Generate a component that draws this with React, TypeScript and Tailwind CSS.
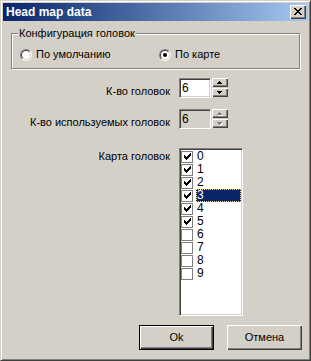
import React from "react";

const raised =
  "shadow-[inset_1px_1px_0_#ffffff,inset_-1px_-1px_0_#404040,inset_-2px_-2px_0_#808080]";
const sunken =
  "border border-t-[#808080] border-l-[#808080] border-r-white border-b-white shadow-[inset_1px_1px_0_#404040,inset_-1px_-1px_0_#d4d0c8]";

function CloseGlyph() {
  // classic 8x7 pixel X
  return (
    <svg width="8" height="7" viewBox="0 0 8 7" shapeRendering="crispEdges">
      <path
        fill="#000"
        d="M0 0h2v1h-2z M6 0h2v1h-2z M1 1h2v1h-2z M5 1h2v1h-2z M2 2h4v1h-4z M3 3h2v1h-2z M2 4h4v1h-4z M1 5h2v1h-2z M5 5h2v1h-2z M0 6h2v1h-2z M6 6h2v1h-2z"
      />
    </svg>
  );
}

function Arrow({ down, disabled }: { down?: boolean; disabled?: boolean }) {
  const d = down ? "M0 0h5v1h-1v1h-1v1h-1v-1h-1v-1h-1z" : "M2 0h1v1h1v1h1v1h-5v-1h1v-1h1z";
  return (
    <svg width="6" height="4" viewBox="0 0 6 4" shapeRendering="crispEdges">
      {disabled && <path d={d} fill="#ffffff" transform="translate(1 1)" />}
      <path d={d} fill={disabled ? "#808080" : "#000000"} />
    </svg>
  );
}

function Check() {
  return (
    <svg width="7" height="7" viewBox="0 0 7 7" shapeRendering="crispEdges">
      <path
        fill="#000"
        d="M6 0h1v1h-1z M5 1h2v1h-2z M0 2h1v1h-1z M4 2h3v1h-3z M0 3h2v1h-2z M3 3h3v1h-3z M0 4h5v1h-5z M1 5h3v1h-3z M2 6h1v1h-1z"
      />
    </svg>
  );
}

function Radio({ checked, label, className }: { checked?: boolean; label: string; className?: string }) {
  return (
    <div className={`flex items-center ${className ?? ""}`}>
      <span className="w-[12px] h-[12px] rounded-full border border-t-[#808080] border-l-[#808080] border-r-white border-b-white flex items-center justify-center">
        <span className="w-[10px] h-[10px] rounded-full bg-white border border-t-[#404040] border-l-[#404040] border-r-[#d4d0c8] border-b-[#d4d0c8] flex items-center justify-center">
          {checked && <span className="w-[4px] h-[4px] rounded-full bg-black" />}
        </span>
      </span>
      <span className="ml-[4px]">{label}</span>
    </div>
  );
}

function Spin({ label, value, disabled, className }: { label: string; value: string; disabled?: boolean; className?: string }) {
  return (
    <div className={`flex items-start ${className ?? ""}`}>
      <div className="w-[167px] text-right mt-[7px]">{label}</div>
      <div className={`ml-[9px] w-[32px] h-[20px] ${sunken} ${disabled ? "bg-[#d4d0c8]" : "bg-white"} pl-[2px] pt-[2px] leading-[14px] text-[12px]`}>
        {value}
      </div>
      <div className="ml-[1px] flex flex-col gap-[1px]">
        <div className={`w-[16px] h-[9px] bg-[#d4d0c8] ${raised} flex items-center justify-center`}>
          <Arrow disabled={disabled} />
        </div>
        <div className={`w-[16px] h-[9px] bg-[#d4d0c8] ${raised} flex items-center justify-center`}>
          <Arrow down disabled={disabled} />
        </div>
      </div>
    </div>
  );
}

const heads = [0, 1, 2, 3, 4, 5, 6, 7, 8, 9];
const checkedHeads = 6;
const selectedHead = 3;

export default function App() {
  return (
    <div className="w-[311px] h-[361px] bg-[#d4d0c8] border border-t-[#d4d0c8] border-l-[#d4d0c8] border-r-[#404040] border-b-[#404040] shadow-[inset_1px_1px_0_#ffffff,inset_-1px_-1px_0_#808080] p-[2px] font-['Liberation_Sans',sans-serif] text-[11px] leading-[13px] text-black flex flex-col">
      {/* Title bar */}
      <div className="h-[18px] bg-gradient-to-r from-[#0a246a] to-[#a6caf0] flex items-center justify-between pl-[3px] pr-[2px]">
        <span className="text-white font-bold text-[12px]">Head map data</span>
        <div className={`w-[16px] h-[14px] bg-[#d4d0c8] ${raised} flex items-center justify-center pb-[1px]`}>
          <CloseGlyph />
        </div>
      </div>

      {/* Head configuration group */}
      <fieldset className="mx-[8px] mt-[6px] border border-[#808080] shadow-[1px_1px_0_#ffffff,inset_1px_1px_0_#ffffff] px-[6px] pt-[8px] pb-[7px]">
        <legend className="px-[1px] bg-[#d4d0c8]">Конфигурация головок</legend>
        <div className="flex items-center h-[13px]">
          <Radio label="По умолчанию" className="ml-[2px] w-[139px]" />
          <Radio label="По карте" checked />
        </div>
      </fieldset>

      <Spin label="К-во головок" value="6" className="mt-[9px]" />
      <Spin label="К-во используемых головок" value="6" disabled className="mt-[11px]" />

      {/* Head map list */}
      <div className="mt-[19px] flex items-start">
        <div className="w-[167px] text-right mt-[2px]">Карта головок</div>
        <div className={`ml-[9px] w-[64px] h-[168px] bg-white ${sunken} py-[1px]`}>
          {heads.map((h) => (
            <div key={h} className="h-[13px] flex items-center pl-[1px] pr-[1px]">
              <span className="w-[12px] h-[12px] border border-[#808080] bg-white flex items-center justify-center">
                {h < checkedHeads && <Check />}
              </span>
              <span
                className={`ml-[3px] flex-1 h-[13px] pl-[1px] leading-[13px] text-[12px] ${
                  h === selectedHead
                    ? "bg-[#0a246a] text-white outline-1 outline-dotted outline-[#f5db95] -outline-offset-1"
                    : ""
                }`}
              >
                {h}
              </span>
            </div>
          ))}
        </div>
      </div>

      {/* Buttons */}
      <div className="mt-[9px] flex justify-end gap-[13px] pr-[6px]">
        <button className="w-[75px] h-[25px] border border-black bg-[#d4d0c8] p-0">
          <div className={`w-full h-full ${raised} flex items-center justify-center`}>Ok</div>
        </button>
        <button className={`w-[75px] h-[25px] bg-[#d4d0c8] ${raised} flex items-center justify-center`}>
          Отмена
        </button>
      </div>
    </div>
  );
}
